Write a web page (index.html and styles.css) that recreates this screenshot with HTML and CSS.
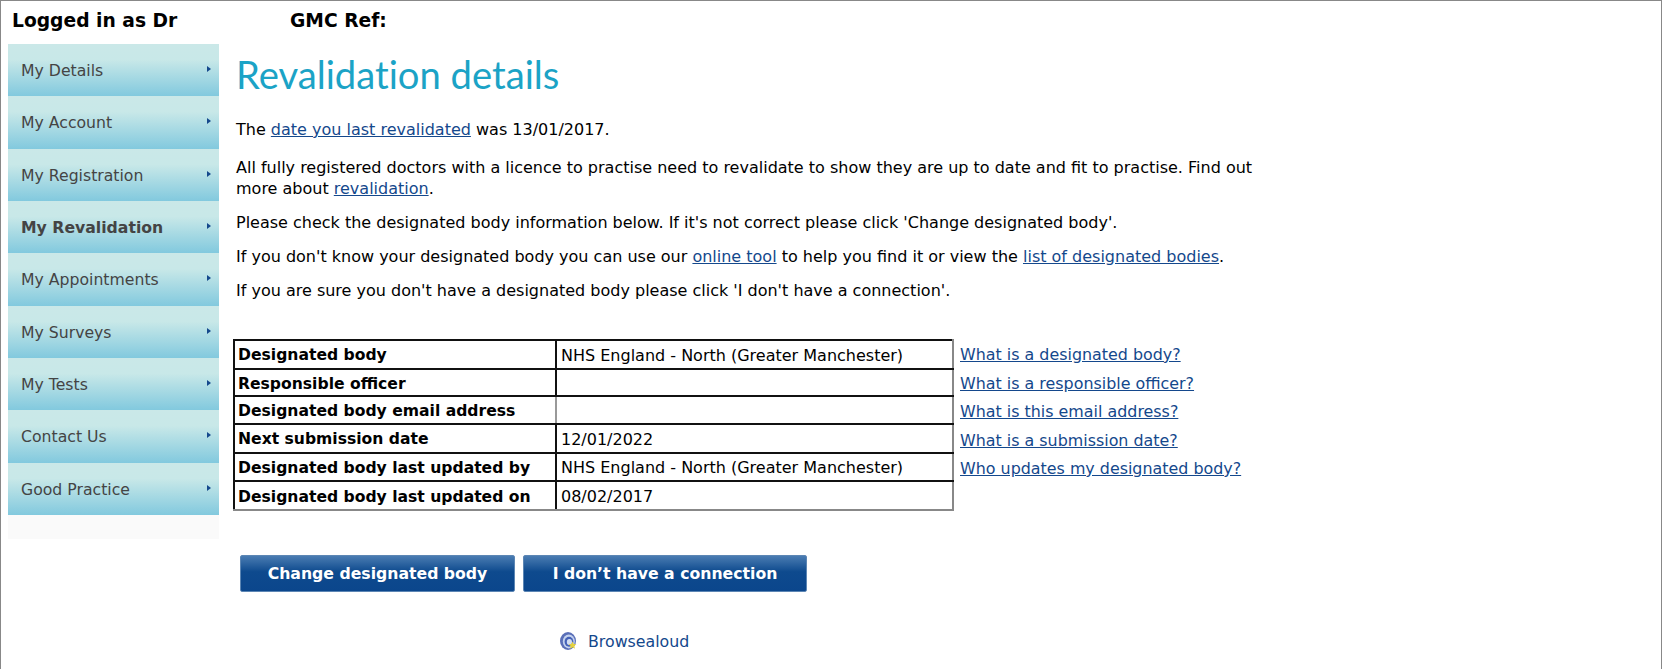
FILE: index.html
```html
<!DOCTYPE html>
<html lang="en-GB">
<head>
  <meta charset="UTF-8" />
  <title>Revalidation details</title>
  <link rel="stylesheet" href="styles.css">
</head>
<body>
  <!-- Logged in bar -->
  <div class="user-bar">
    <span class="user-name">Logged in as Dr</span>
    <span class="user-ref">GMC Ref:</span>
  </div>

  <div class="page">
    <!-- Side menu -->
    <nav class="side-menu">
      <a class="menu-item" href="#">My Details</a>
      <a class="menu-item" href="#">My Account</a>
      <a class="menu-item" href="#">My Registration</a>
      <a class="menu-item active" href="#">My Revalidation</a>
      <a class="menu-item" href="#">My Appointments</a>
      <a class="menu-item" href="#">My Surveys</a>
      <a class="menu-item" href="#">My Tests</a>
      <a class="menu-item" href="#">Contact Us</a>
      <a class="menu-item" href="#">Good Practice</a>
      <div class="menu-foot"></div>
    </nav>

    <!-- Main content -->
    <main class="content">
      <h1>Revalidation details</h1>
      <div class="intro">
        <p>The <a href="#">date you last revalidated</a> was 13/01/2017.</p>
        <p>All fully registered doctors with a licence to practise need to revalidate to show they are up to date and fit to practise. Find out more about <a href="#">revalidation</a>.</p>
        <p>Please check the designated body information below. If it's not correct please click 'Change designated body'.</p>
        <p>If you don't know your designated body you can use our <a href="#">online tool</a> to help you find it or view the <a href="#">list of designated bodies</a>.</p>
        <p>If you are sure you don't have a designated body please click 'I don't have a connection'.</p>
      </div>

      <div class="details">
        <table class="details-table">
          <tr><th>Designated body</th><td>NHS England - North (Greater Manchester)</td></tr>
          <tr><th>Responsible officer</th><td></td></tr>
          <tr class="row-faint"><th>Designated body email address</th><td></td></tr>
          <tr><th>Next submission date</th><td>12/01/2022</td></tr>
          <tr><th>Designated body last updated by</th><td>NHS England - North (Greater Manchester)</td></tr>
          <tr><th>Designated body last updated on</th><td>08/02/2017</td></tr>
        </table>
        <ul class="help-links">
          <li><a href="#">What is a designated body?</a></li>
          <li><a href="#">What is a responsible officer?</a></li>
          <li><a href="#">What is this email address?</a></li>
          <li><a href="#">What is a submission date?</a></li>
          <li><a href="#">Who updates my designated body?</a></li>
        </ul>
      </div>

      <div class="actions">
        <button class="btn btn-change">Change designated body</button>
        <button class="btn btn-none">I don’t have a connection</button>
      </div>

      <div class="browsealoud">
        <svg class="ba-icon" viewBox="0 0 18 20" width="18" height="20" aria-hidden="true">
          <ellipse cx="9" cy="10" rx="8" ry="9" fill="#5a6fb8"/>
          <ellipse cx="9.8" cy="10.4" rx="6" ry="7" fill="#c4d2ee"/>
          <ellipse cx="10" cy="10.8" rx="4.4" ry="5" fill="#4562b8"/>
          <ellipse cx="10.4" cy="11" rx="2.6" ry="3" fill="#d3def3"/>
          <polygon points="13.5,10.5 14.6,13 17.4,13.2 15.3,15 16,17.8 13.5,16.3 11,17.8 11.7,15 9.6,13.2 12.4,13" fill="#e6d23c"/>
        </svg>
        <a href="#">Browsealoud</a>
      </div>
    </main>
  </div>
</body>
</html>
```

FILE: styles.css
```css
/* Page */
html, body {
  height: 100%;
}

body {
  margin: 0;
  box-sizing: border-box;
  border: 1px solid #888;
  border-bottom: 0;
  background: #fff;
  color: #000;
  font-family: "DejaVu Sans", Verdana, sans-serif;
  font-size: 16px;
  overflow: hidden;
}

a {
  color: #14488c;
}

/* Logged in bar */
.user-bar {
  display: flex;
  height: 43px;
  align-items: center;
  padding: 0 0 5px 11px;
  box-sizing: border-box;
  font-size: 18.7px;
  font-weight: bold;
}

.user-name {
  width: 278px;
}

.page {
  display: flex;
}

/* Side menu */
.side-menu {
  width: 211px;
  margin-left: 7px;
  flex-shrink: 0;
}

.menu-item {
  display: block;
  position: relative;
  height: 52.33px;
  line-height: 54px;
  padding-left: 13px;
  box-sizing: border-box;
  color: #444;
  font-size: 15.7px;
  text-decoration: none;
  background: linear-gradient(to bottom, #cae8e8 0%, #c8e8e8 30%, #82c9de 100%);
}

/* small arrow on the right of each item */
.menu-item::after {
  content: "";
  position: absolute;
  right: 8px;
  top: 22px;
  border-left: 4px solid #14488c;
  border-top: 3px solid transparent;
  border-bottom: 3px solid transparent;
}

.menu-item.active {
  font-weight: bold;
}

.menu-foot {
  height: 24px;
  background: #fafafa;
}

/* Main content */
.content {
  padding-left: 17px;
  width: 1100px;
}

h1 {
  margin: 2px 0 0;
  color: #1ba3c6;
  font-family: Lato, sans-serif;
  font-size: 38.2px;
  font-weight: normal;
  font-variant-ligatures: none;
  line-height: 56px;
}

.intro {
  width: 1030px;
  margin-top: 17px;
}

.intro p {
  margin: 0 0 13px;
  line-height: 21px;
}

.intro p:first-child {
  margin-bottom: 17px;
}

/* Details table and help links */
.details {
  display: flex;
  margin: 38px 0 0 -3px;
}

.details-table {
  border-collapse: collapse;
  table-layout: fixed;
  width: 721px;
  height: 172px;
  border-right: 2px solid #888;
  border-bottom: 2px solid #888;
}

.details-table th,
.details-table td {
  padding: 2px 4px 0;
  border: 2px solid #111;
  text-align: left;
  font-size: 16px;
  white-space: nowrap;
}

.details-table th {
  width: 313px;
  padding-left: 3px;
  font-size: 15.6px;
}

.details-table tr:last-child th,
.details-table tr:last-child td {
  border-bottom-color: #888;
}

.details-table td {
  border-right-color: #888;
}

.row-faint th {
  border-right-color: #999;
}

.help-links {
  list-style: none;
  margin: 0;
  padding: 2px 0 0 6px;
  font-size: 15.9px;
}

.help-links li {
  height: 28.5px;
  line-height: 28.5px;
}

/* Buttons */
.actions {
  display: flex;
  gap: 8px;
  margin: 44px 0 0 4px;
}

.btn {
  height: 37px;
  border: 1px solid #5c86b4;
  border-radius: 2px;
  background: linear-gradient(to bottom, #4a7cb2 0%, #0e4a8e 45%, #0b468c 100%);
  color: #fff;
  font-family: "DejaVu Sans", Verdana, sans-serif;
  font-size: 15.7px;
  font-weight: bold;
}

.btn-change {
  width: 275px;
}

.btn-none {
  width: 284px;
}

/* Browsealoud link */
.browsealoud {
  display: flex;
  align-items: center;
  margin: 39px 0 0 323px;
}

.browsealoud a {
  margin-left: 11px;
  text-decoration: none;
  font-size: 15.8px;
}
```
